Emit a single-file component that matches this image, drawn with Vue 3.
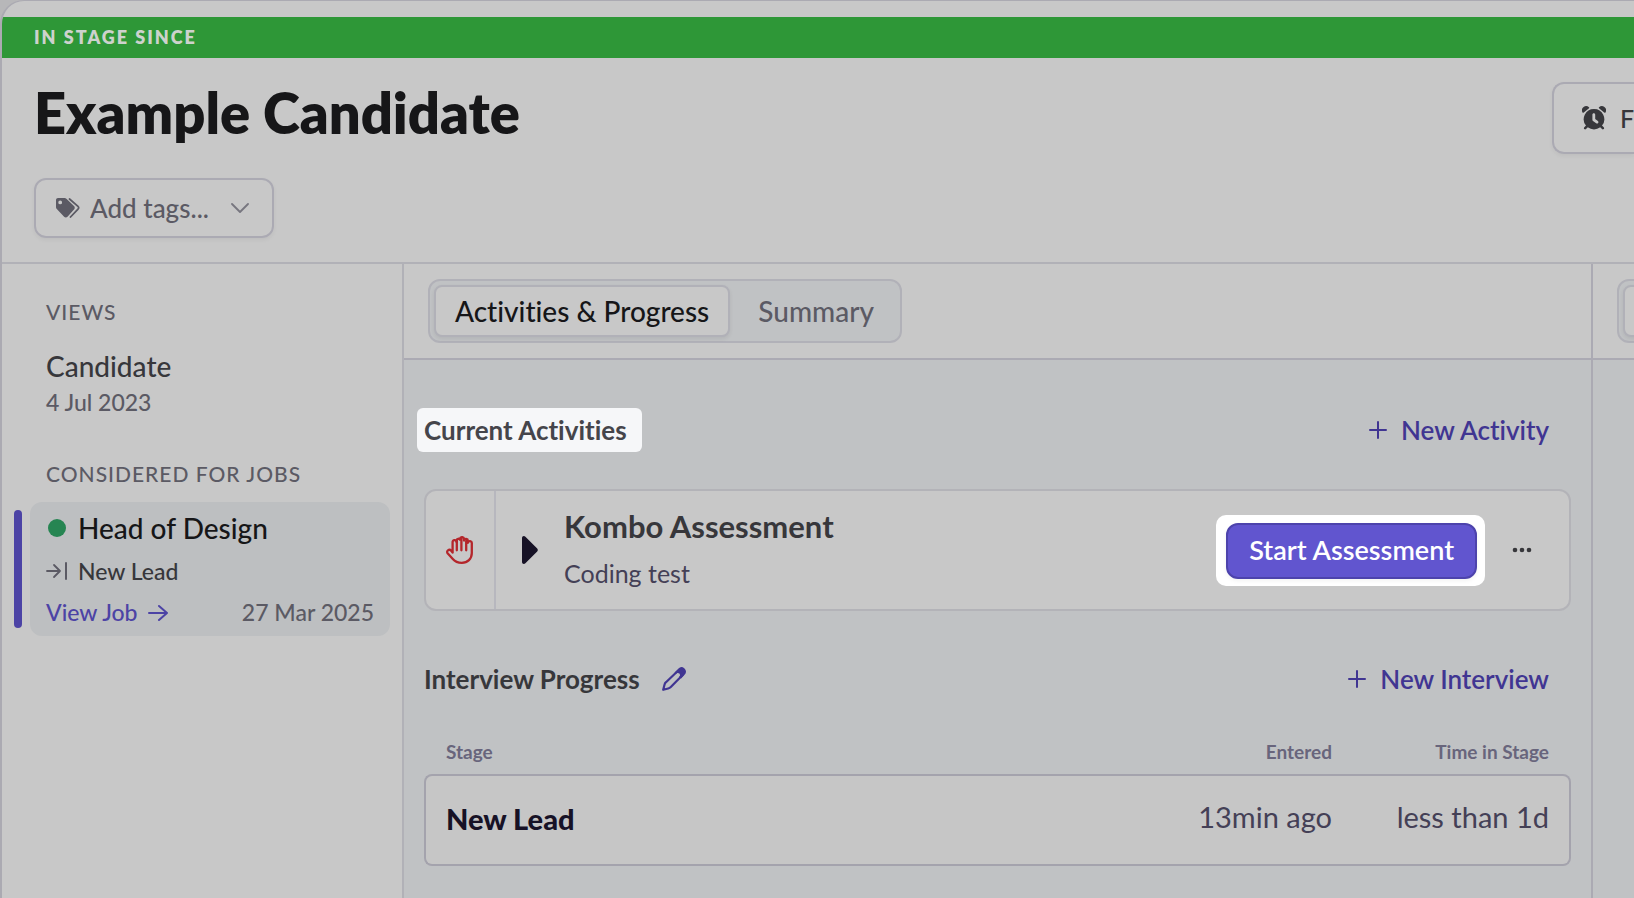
<script setup>
import { ref } from 'vue'

const tab = ref('activities')
const tag = ref('')
const stages = [{ name: 'New Lead', entered: '13min ago', time: 'less than 1d' }]
</script>

<template>
  <div class="page">
    <div class="stage-banner">IN STAGE SINCE</div>

    <header class="header">
      <div class="identity">
        <h1>Example Candidate</h1>
        <label class="tags">
          <svg class="tag-icon" viewBox="0 0 24 20" aria-hidden="true">
            <path fill="currentColor" fill-rule="evenodd" d="M2 0h6.600c.7 0 1.300.3 1.800.7l7.600 7.300c1 1 1 2.500 0 3.500l-6.500 7.300c-1 1-2.400 1-3.400 0L.8 11C.3 10.500 0 9.900 0 9.200V2C0 .9.9 0 2 0Zm2.200 2.500a1.900 1.900 0 1 0 0 3.800 1.900 1.900 0 0 0 0-3.800Z" />
            <path d="m13.500 1 8.500 7.400c.9.800.9 1.900 0 2.700L14.500 19" fill="none" stroke="currentColor" stroke-width="1.800" stroke-linecap="round" />
          </svg>
          <select v-model="tag" aria-label="Add tags">
            <option value="">Add tags...</option>
          </select>
          <svg class="chevron" viewBox="0 0 18 10" aria-hidden="true">
            <path d="m1 1 8 8 8-8" fill="none" stroke="currentColor" stroke-width="1.800" stroke-linecap="round" stroke-linejoin="round" />
          </svg>
        </label>
      </div>
      <button class="reminder" type="button">
        <svg viewBox="0 0 24 24" aria-hidden="true">
          <path fill="currentColor" fill-rule="evenodd" d="M12 3a10.200 10.200 0 0 1 8 16.600l1.700 1.700a1.200 1.200 0 0 1-1.700 1.700l-1.800-1.700a10.100 10.100 0 0 1-12.400 0L4 23a1.200 1.200 0 0 1-1.700-1.700L4 19.600A10.200 10.200 0 0 1 12 3Zm-.2 4.300c-.8 0-1.400.6-1.400 1.400v5c0 .5.2.9.6 1.200l3.200 2.300c1.500 1 3-.9 1.700-2.100l-2.700-2V8.700c0-.8-.6-1.400-1.400-1.400Z" />
          <path fill="currentColor" d="M.4 6.300A4.200 4.200 0 0 1 7 1.300c.4.400.2.900-.3 1.200L1.500 6.700c-.4.300-.9.100-1.100-.4Zm23.200 0A4.200 4.200 0 0 0 17 1.300c-.4.400-.2.900.3 1.200l5.200 4.200c.4.300.9.100 1.100-.4Z" />
        </svg>
        <span>F</span>
      </button>
    </header>

    <div class="columns">
      <aside class="sidebar">
        <h2>VIEWS</h2>
        <div class="view">
          <div class="view-name">Candidate</div>
          <div class="view-date">4 Jul 2023</div>
        </div>
        <h2>CONSIDERED FOR JOBS</h2>
        <div class="job-row">
          <span class="job-marker"></span>
          <article class="job">
            <div class="job-title"><span class="dot"></span>Head of Design</div>
            <div class="job-stage">
              <svg viewBox="0 0 22 18" aria-hidden="true">
                <path d="M1 9h13M8 3l6 6-6 6" fill="none" stroke="currentColor" stroke-width="1.800" stroke-linecap="round" stroke-linejoin="round" />
                <path d="M20 1v16" stroke="currentColor" stroke-width="2" stroke-linecap="round" />
              </svg>
              New Lead
            </div>
            <div class="job-foot">
              <a href="#">View Job
                <svg viewBox="0 0 20 18" aria-hidden="true">
                  <path d="M1 9h18M11 2l8 7-8 7" fill="none" stroke="currentColor" stroke-width="2" stroke-linecap="round" stroke-linejoin="round" />
                </svg>
              </a>
              <span>27 Mar 2025</span>
            </div>
          </article>
        </div>
      </aside>

      <main class="main">
        <div class="tabbar">
          <div class="tabs" role="tablist">
            <button type="button" role="tab" :class="{ active: tab === 'activities' }" :aria-selected="tab === 'activities'" @click="tab = 'activities'">Activities &amp; Progress</button>
            <button type="button" role="tab" :class="{ active: tab === 'summary' }" :aria-selected="tab === 'summary'" @click="tab = 'summary'">Summary</button>
          </div>
        </div>

        <div class="content">
          <div class="section-head">
            <h3 class="highlight">Current Activities</h3>
            <button class="new" type="button">
              <svg viewBox="0 0 18 18" aria-hidden="true"><path d="M9 1v16M1 9h16" stroke="currentColor" stroke-width="2" stroke-linecap="round" /></svg>
              New Activity
            </button>
          </div>

          <article class="activity">
            <div class="hand">
              <svg viewBox="0 0 28 28" aria-hidden="true">
                <path d="M6.600 16.500V6.200a1.800 1.800 0 0 1 3.900-.3V4.300a1.900 1.900 0 0 1 3.500-.6V2.900a1.900 1.900 0 0 1 4 .7v1a1.900 1.900 0 0 1 3.800.5v1.800a1.900 1.900 0 0 1 4 .6V17c0 6-4.200 9.800-10 9.800-4.200 0-6.800-1.200-9-3.800l-5-5.500c-2.100-2.500 1.400-5 3.400-2.700l1.400 1.700" />
                <path d="M10.800 4.500v9.800M15.400 3v11.300M20.200 5v9.300" />
              </svg>
            </div>
            <div class="activity-body">
              <button class="expand" type="button" aria-label="Expand">
                <svg viewBox="0 0 16 28" aria-hidden="true"><path fill="currentColor" d="M3.400.7 15.200 12.600c.8.800.8 2 0 2.800L3.400 27.300C2.100 28.600 0 28 0 26V2C0 0 2.100-.6 3.400.7Z" /></svg>
              </button>
              <div class="activity-text">
                <h4>Kombo Assessment</h4>
                <p>Coding test</p>
              </div>
              <div class="spotlight">
                <button class="start" type="button">Start Assessment</button>
              </div>
              <button class="more" type="button" aria-label="More">
                <svg viewBox="0 0 20 6" aria-hidden="true"><g fill="currentColor"><circle cx="3" cy="3" r="2.300" /><circle cx="10" cy="3" r="2.300" /><circle cx="17" cy="3" r="2.300" /></g></svg>
              </button>
            </div>
          </article>

          <div class="section-head progress-head">
            <h3>Interview Progress
              <button class="edit" type="button" aria-label="Edit">
                <svg viewBox="0 0 24 24" aria-hidden="true">
                  <path d="M16.800 3 4 15.200c-.8.700-1.200 1.400-1.500 2.500L1.200 22.800l5-1.300c1.100-.3 1.800-.7 2.600-1.500L21.100 7.400" fill="none" stroke="currentColor" stroke-width="2.200" stroke-linejoin="round" />
                  <path d="M15.500 2.700c2.200-3.100 4.700-3.300 6.700-1.500 2.100 1.900 2.400 4.300.6 6.300l-3.700 4-2-1.600.9-1.400c.1-1.700-1-2.700-2.600-2.500l-1.400.8-1.500-1.300Z" fill="currentColor" />
                </svg>
              </button>
            </h3>
            <button class="new" type="button">
              <svg viewBox="0 0 18 18" aria-hidden="true"><path d="M9 1v16M1 9h16" stroke="currentColor" stroke-width="2" stroke-linecap="round" /></svg>
              New Interview
            </button>
          </div>

          <table class="stages">
            <thead>
              <tr><th scope="col">Stage</th><th scope="col">Entered</th><th scope="col">Time in Stage</th></tr>
            </thead>
            <tbody>
              <tr v-for="stage in stages" :key="stage.name">
                <td>{{ stage.name }}</td><td>{{ stage.entered }}</td><td>{{ stage.time }}</td>
              </tr>
            </tbody>
          </table>
        </div>
      </main>

      <section class="side-panel">
        <div class="tabbar"><div class="tabs"><button class="active" type="button" aria-label="Panel tab"></button></div></div>
      </section>
    </div>
  </div>
</template>

<style>
body { background: #b7b7b9; }
</style>

<style scoped>
.page, .page * { box-sizing: border-box; }
.page {
  display: flex;
  flex-direction: column;
  min-height: 100vh;
  overflow: hidden;
  background: #c8c8c8;
  border: solid #abaab2;
  border-width: 1px 0 0 2px;
  border-radius: 24px 0 0 0;
  font-family: Lato, "Open Sans", sans-serif;
  font-weight: 500;
  font-variant-ligatures: none;
  color: #37373b;
}
h1, h2, h3, h4, p { margin: 0; }
svg { display: block; flex: none; }
button {
  padding: 0;
  border: 0;
  background: none;
  font: inherit;
  font-variant-ligatures: none;
  color: inherit;
  cursor: pointer;
}
.stage-banner {
  margin-top: 16px;
  padding-left: 32px;
  background: #2e9737;
  color: #cdd2cd;
  font-size: 18px;
  font-weight: 800;
  line-height: 41px;
  letter-spacing: 2px;
}
.header {
  display: flex;
  justify-content: space-between;
  padding: 24px 0 24px 32px;
  border-bottom: 2px solid #b1b1b7;
}
h1 {
  font-size: 56px;
  font-weight: 800;
  line-height: 62px;
  color: #161618;
}
.tags {
  display: flex;
  align-items: center;
  width: 240px;
  height: 60px;
  margin-top: 34px;
  padding: 0 23px 0 20px;
  border: 2px solid #abaab3;
  border-radius: 12px;
  box-shadow: 0 2px 4px #0000000d;
  color: #5b5a64;
}
.tag-icon { width: 24px; height: 20px; }
select {
  flex: 1;
  min-width: 0;
  margin-left: 10px;
  padding: 0;
  border: 0;
  appearance: none;
  background: none;
  color: inherit;
  font: inherit;
  font-size: 26px;
}
.chevron { width: 18px; height: 10px; color: #77767f; }
.reminder {
  display: flex;
  align-items: center;
  gap: 14px;
  width: 82px;
  height: 72px;
  padding-left: 28px;
  border: 2px solid #abaab3;
  border-right: 0;
  border-radius: 12px 0 0 12px;
  box-shadow: 0 2px 4px #0000000d;
  font-size: 25px;
}
.reminder svg { width: 24px; height: 24px; }
.columns { display: flex; flex: 1; }
.sidebar {
  flex: none;
  width: 402px;
  padding: 32px 12px 0;
  border-right: 2px solid #b1b1b7;
}
h2 {
  padding-left: 32px;
  font-size: 21px;
  font-weight: 500;
  line-height: 32px;
  letter-spacing: 1px;
  color: #5b5a64;
}
.view { padding: 20px 0 38px 32px; }
.view-name { font-size: 28px; line-height: 36px; }
.view-date { font-size: 23px; line-height: 36px; color: #5b5a64; }
.job-row { display: flex; gap: 8px; margin-top: 12px; }
.job-marker { width: 8px; margin: 8px 0; border-radius: 4px; background: #4c43a5; }
.job {
  flex: 1;
  height: 134px;
  padding: 4px 16px 0;
  border-radius: 12px;
  background: #bdbfc1;
}
.job-title, .job-stage, .job-foot, .job-foot a { display: flex; align-items: center; }
.job-title { gap: 12px; font-size: 28px; line-height: 44px; color: #161618; }
.dot { width: 18px; height: 18px; margin-left: 2px; border-radius: 50%; background: #268552; }
.job-stage { gap: 10px; font-size: 23px; line-height: 42px; }
.job-stage svg { width: 22px; height: 18px; color: #5b5a64; }
.job-foot { justify-content: space-between; font-size: 23px; line-height: 41px; color: #5b5a64; }
.job-foot a { gap: 10px; color: #4c43a5; text-decoration: none; }
.job-foot svg { width: 20px; height: 18px; }
.main { flex: 1; min-width: 0; display: flex; flex-direction: column; }
.tabbar {
  flex: none;
  height: 96px;
  padding: 15px 24px;
  border-bottom: 2px solid #abaab3;
}
.tabs {
  display: inline-flex;
  gap: 6px;
  height: 64px;
  padding: 4px;
  border: 2px solid #b1b1b8;
  border-radius: 12px;
  background: #c0c2c4;
}
.tabs button {
  padding: 0 22px;
  border-radius: 8px;
  font-size: 28px;
  line-height: 46px;
  color: #5b5a64;
}
.tabs .active {
  padding: 0 19px;
  border: 2px solid #b1b1b8;
  background: #c8c8c8;
  box-shadow: 0 2px 4px #00000012;
  color: #161618;
}
.content {
  flex: 1;
  padding: 48px 20px 0;
  background: #c0c2c4;
}
.section-head {
  display: flex;
  align-items: center;
  justify-content: space-between;
  height: 44px;
  padding-right: 22px;
}
h3 {
  display: flex;
  align-items: center;
  font-size: 26px;
  font-weight: 700;
  line-height: 44px;
}
.highlight {
  margin-left: -7px;
  padding: 0 15px 0 7px;
  border-radius: 6px;
  background: #f6f7f9;
  color: #45454b;
}
.new {
  display: flex;
  align-items: center;
  gap: 14px;
  font-size: 26px;
  font-weight: 600;
  line-height: 42px;
  color: #403592;
}
.new svg { width: 18px; height: 18px; }
.activity {
  display: flex;
  height: 122px;
  margin-top: 37px;
  border: 2px solid #b3b3b8;
  border-radius: 12px;
  background: #c8c8c8;
}
.hand {
  display: flex;
  align-items: center;
  justify-content: center;
  width: 70px;
  border-right: 2px solid #b7b7be;
}
.hand svg {
  width: 28px;
  height: 28px;
  fill: none;
  stroke: #b4262b;
  stroke-width: 2.300;
  stroke-linecap: round;
  stroke-linejoin: round;
}
.activity-body { flex: 1; display: flex; align-items: center; padding: 0 37px 0 26px; }
.expand { color: #171226; }
.expand svg { width: 16px; height: 28px; }
.activity-text { flex: 1; padding-left: 26px; }
h4 { font-size: 31px; font-weight: 700; line-height: 46px; }
p { font-size: 25px; font-weight: 400; line-height: 48px; color: #444056; }
.spotlight { padding: 8px 8px 7px 10px; border-radius: 10px; background: #fff; }
.start {
  display: block;
  height: 56px;
  padding: 0 21px 2px;
  border: 2px solid #4d43ac;
  border-radius: 12px;
  background: #6155cf;
  box-shadow: 0 2px 4px #0000000d;
  font-size: 27px;
  font-weight: 600;
  color: #fff;
}
.more { margin-left: 27px; }
.more svg { width: 20px; height: 6px; }
.progress-head { margin-top: 46px; }
.edit { margin-left: 22px; color: #403592; }
.edit svg { width: 24px; height: 24px; }
.stages { width: 100%; margin-top: 34px; border-spacing: 0; }
th {
  padding: 0 22px 5px;
  font-size: 19px;
  font-weight: 700;
  line-height: 34px;
  text-align: right;
  color: #68657c;
}
td {
  height: 92px;
  padding: 0 22px 8px;
  border: solid #a4a3ad;
  border-width: 2px 0;
  background: #c6c6c6;
  font-size: 29px;
  font-weight: 400;
  text-align: right;
  color: #444056;
}
th:first-child, td:first-child { text-align: left; }
td:first-child {
  padding: 0 20px 4px;
  border-left-width: 2px;
  border-radius: 8px 0 0 8px;
  font-weight: 900;
  color: #171226;
}
td:last-child { width: 217px; padding-right: 20px; border-right-width: 2px; border-radius: 0 8px 8px 0; }
.side-panel { flex: none; width: 43px; overflow: hidden; border-left: 2px solid #abaab3; background: #c0c2c4; }
.side-panel .tabbar { width: 200px; background: #c8c8c8; }
.side-panel .active { width: 120px; }
</style>
